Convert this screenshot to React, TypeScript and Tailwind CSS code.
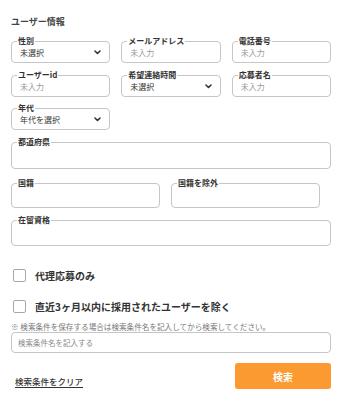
import React from "react";

const font = "font-['Noto_Sans_CJK_JP','Noto_Sans',sans-serif]";

function Chevron() {
  return (
    <svg width="7" height="5" viewBox="0 0 7 5" className="shrink-0 mr-[2px]">
      <path d="M1 1 L3.5 3.5 L6 1" fill="none" stroke="#333" strokeWidth="1.6" strokeLinecap="round" strokeLinejoin="round" />
    </svg>
  );
}

function Field({
  label,
  value,
  placeholder,
  select,
  className = "h-[22px]",
}: {
  label: string;
  value?: string;
  placeholder?: string;
  select?: boolean;
  className?: string;
}) {
  return (
    <div className={`relative border border-[#c6c6c6] rounded-[4px] flex items-center pl-[8px] pr-[6px] ${className}`}>
      <span className="absolute top-[-6px] left-[5px] px-[1px] bg-white text-[8px] leading-[10px] font-bold text-[#333]">
        {label}
      </span>
      {value && <span className="flex-1 text-[8px] leading-[10px] text-[#333] pt-[1px]">{value}</span>}
      {placeholder && <span className="flex-1 text-[8px] leading-[10px] text-[#9a9a9a] pt-[1px]">{placeholder}</span>}
      {!value && !placeholder && <span className="flex-1" />}
      {select && <Chevron />}
    </div>
  );
}

function Check({ label }: { label: string }) {
  return (
    <div className="flex items-center h-[13px] pl-[2px]">
      <div className="w-[13px] h-[13px] border border-[#a8a8a8] rounded-[2px] bg-white" />
      <span className="ml-[9px] text-[10px] leading-[13px] font-bold text-[#333]">{label}</span>
    </div>
  );
}

export default function App() {
  return (
    <div className={`w-[342px] h-[400px] bg-white px-[11px] pt-[16px] ${font} overflow-hidden`}>
      <div className="text-[9px] leading-[12px] font-bold text-[#444]">ユーザー情報</div>

      <div className="mt-[13px] grid grid-cols-3 gap-x-[11px] gap-y-[12px]">
        <Field label="性別" value="未選択" select />
        <Field label="メールアドレス" placeholder="未入力" />
        <Field label="電話番号" placeholder="未入力" />
        <Field label="ユーザーid" placeholder="未入力" />
        <Field label="希望連絡時間" value="未選択" select />
        <Field label="応募者名" placeholder="未入力" />
      </div>

      <div className="mt-[11px] grid grid-cols-3 gap-x-[11px]">
        <Field label="年代" value="年代を選択" select />
      </div>

      <div className="mt-[12px]">
        <Field label="都道府県" className="h-[27px]" />
      </div>

      <div className="mt-[14px] flex gap-[11px]">
        <div className="w-[149px]">
          <Field label="国籍" className="h-[25px]" />
        </div>
        <div className="w-[149px]">
          <Field label="国籍を除外" className="h-[25px]" />
        </div>
      </div>

      <div className="mt-[12px]">
        <Field label="在留資格" className="h-[26px]" />
      </div>

      <div className="mt-[23px]">
        <Check label="代理応募のみ" />
      </div>
      <div className="mt-[18px]">
        <Check label="直近3ヶ月以内に採用されたユーザーを除く" />
      </div>

      <div className="mt-[9px] text-[7.6px] leading-[10px] text-[#777] whitespace-nowrap">
        ※ 検索条件を保存する場合は検索条件名を記入してから検索してください。
      </div>
      <div className="h-[21px] border border-[#c6c6c6] rounded-[4px] flex items-center pl-[6px]">
        <span className="text-[7.5px] leading-[10px] text-[#888]">検索条件名を記入する</span>
      </div>

      <div className="mt-[10px] flex items-end justify-between">
        <span className="ml-[4px] mb-[2px] text-[8.5px] leading-[12px] font-medium text-[#333] underline underline-offset-[2px]">
          検索条件をクリア
        </span>
        <div className="w-[96px] h-[26px] rounded-[3px] bg-[#fb9a30] flex items-center justify-center text-white text-[10px] font-bold">
          検索
        </div>
      </div>
    </div>
  );
}
